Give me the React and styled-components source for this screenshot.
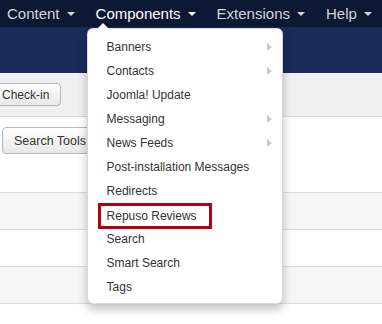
import styled, { createGlobalStyle } from 'styled-components';

const GlobalStyle = createGlobalStyle`
  html, body {
    margin: 0;
    padding: 0;
    background: #fff;
    overflow: hidden;
  }
  body {
    font-family: 'Liberation Sans', Arial, sans-serif;
  }
`;

const Page = styled.div`
  width: 382px;
  height: 324px;
  overflow: hidden;
`;

const NavBar = styled.nav`
  height: 27px;
  padding-left: 7px;
  display: flex;
  flex-direction: row;
  gap: 21px;
  background: #0d1934;
  position: relative;
  z-index: 2;
`;

const NavItem = styled.div`
  position: relative;
  display: flex;
  align-items: center;
  line-height: 27px;
  font-size: 15px;
  color: ${(p) => (p.$active ? '#fff' : '#d2d5dc')};
  white-space: nowrap;
`;

const Caret = styled.span`
  display: inline-block;
  margin-left: 7px;
  margin-top: 1px;
  width: 0;
  height: 0;
  border-left: 4px solid transparent;
  border-right: 4px solid transparent;
  border-top: 4px solid currentColor;
`;

const Dropdown = styled.ul`
  position: absolute;
  left: -9px;
  top: 28px;
  width: 196px;
  margin: 0;
  padding: 6px 0 4px;
  list-style: none;
  background: #fff;
  border: 1px solid rgba(0, 0, 0, 0.15);
  border-radius: 6px;
  box-shadow: 0 5px 10px rgba(0, 0, 0, 0.25);
  box-sizing: border-box;

  &::before {
    content: '';
    position: absolute;
    left: 9px;
    top: -6px;
    border-left: 6px solid transparent;
    border-right: 6px solid transparent;
    border-bottom: 6px solid #fff;
  }
`;

const MenuItem = styled.li`
  position: relative;
  height: 24px;
  padding-left: 19px;
  line-height: 24px;
  font-size: 12px;
  color: #333;
  white-space: nowrap;
`;

const Label = styled.span`
  display: inline-block;
  vertical-align: top;
  ${(p) =>
    p.$marked &&
    `
    margin-left: -9px;
    padding-left: 6px;
    width: 114px;
    height: 26px;
    line-height: 20px;
    border: 3px solid #b3000f;
    box-sizing: border-box;
  `}
`;

const SubArrow = styled.span`
  position: absolute;
  right: 10px;
  top: 8px;
  width: 0;
  height: 0;
  border-top: 4px solid transparent;
  border-bottom: 4px solid transparent;
  border-left: 5px solid #c8c8c8;
`;

const Header = styled.div`
  height: 46px;
  background: #182b59;
`;

const Toolbar = styled.div`
  height: 44px;
  padding-top: 10px;
  box-sizing: border-box;
  background: #f0f0f0;
  border-bottom: 1px solid #dcdcdc;
`;

const Button = styled.button`
  height: ${(p) => p.$h}px;
  margin-left: ${(p) => p.$ml}px;
  padding: 0 ${(p) => p.$px}px;
  font-family: 'Liberation Sans', Arial, sans-serif;
  font-size: ${(p) => p.$fs}px;
  color: #333;
  background: linear-gradient(#fff, #e8e8e8);
  border: 1px solid #b8b8b8;
  border-radius: 4px;
  box-shadow: inset 0 1px 0 rgba(255, 255, 255, 0.6);
  white-space: nowrap;
`;

const Filters = styled.div`
  height: 75px;
  padding-top: 10px;
  box-sizing: border-box;
`;

const Row = styled.div`
  height: 37px;
  border-top: 1px solid #dcdcdc;
  box-sizing: border-box;
  background: ${(p) => (p.$odd ? '#f6f6f6' : '#fff')};
`;

const items = [
  { name: 'Banners', sub: true },
  { name: 'Contacts', sub: true },
  { name: 'Joomla! Update' },
  { name: 'Messaging', sub: true },
  { name: 'News Feeds', sub: true },
  { name: 'Post-installation Messages' },
  { name: 'Redirects' },
  { name: 'Repuso Reviews', marked: true },
  { name: 'Search' },
  { name: 'Smart Search' },
  { name: 'Tags' },
];

export default function App() {
  return (
    <Page>
      <GlobalStyle />
      <NavBar>
        <NavItem>
          Content<Caret />
        </NavItem>
        <NavItem $active>
          Components<Caret />
          <Dropdown>
            {items.map((it) => (
              <MenuItem key={it.name}>
                <Label $marked={it.marked}>{it.name}</Label>
                {it.sub && <SubArrow />}
              </MenuItem>
            ))}
          </Dropdown>
        </NavItem>
        <NavItem>
          Extensions<Caret />
        </NavItem>
        <NavItem>
          Help<Caret />
        </NavItem>
      </NavBar>
      <Header />
      <Toolbar>
        <Button $h={23} $ml={-10} $px={11} $fs={12}>Check-in</Button>
      </Toolbar>
      <Filters>
        <Button $h={27} $ml={2} $px={11} $fs={12.5}>Search Tools</Button>
      </Filters>
      <Row $odd />
      <Row />
      <Row $odd />
      <Row />
    </Page>
  );
}
